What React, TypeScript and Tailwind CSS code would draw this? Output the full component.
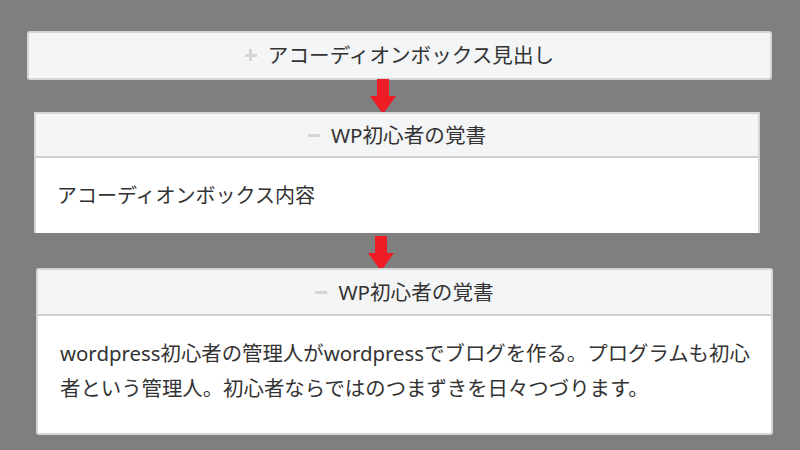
import React from 'react';

const font = { fontFamily: '"Noto Sans", "Noto Sans CJK JP", sans-serif' };

// Red down arrow drawn between the accordion states
function DownArrow({ offset }: { offset: string }) {
  return (
    <div className={`flex ${offset}`}>
      <svg width="28" height="36" viewBox="0 0 28 36">
        <polygon points="8,0 20,0 20,17 27,17 14,35 1,17 8,17" fill="#ee1c25" />
      </svg>
    </div>
  );
}

function Header({ open, title }: { open: boolean; title: string }) {
  return (
    <div className="flex items-center justify-center gap-[11px] text-[20.6px] text-[#333]">
      <span className="relative inline-block w-[12px] h-[12px]">
        <span className="absolute left-0 top-[5px] w-[12px] h-[3px] bg-[#d4d5d7]" />
        {!open && <span className="absolute left-[4.5px] top-0 w-[3px] h-[12px] bg-[#d4d5d7]" />}
      </span>
      <span>{title}</span>
    </div>
  );
}

export default function App() {
  return (
    <div className="w-[800px] h-[450px] bg-[#7f7f7f] overflow-hidden" style={font}>
      <div className="flex flex-col pt-[31px]">
        {/* closed accordion */}
        <div className="ml-[27px] w-[745px] h-[49px] flex items-center justify-center rounded-[3px] border-2 border-[#d6d6d6] bg-[#f4f5f7]">
          <Header open={false} title="アコーディオンボックス見出し" />
        </div>

        <DownArrow offset="ml-[369px] -mt-[1px] h-[33px]" />

        {/* opened accordion, short content */}
        <div className="ml-[34px] w-[726px] h-[121px] flex flex-col border-2 border-b-0 border-[#d6d6d6] bg-white">
          <div className="h-[44px] flex items-center justify-center bg-[#f4f5f7] border-b-2 border-[#d0d0d0]">
            <Header open title="WP初心者の覚書" />
          </div>
          <div className="flex-1 flex items-center px-[21px] text-[20px] text-[#333]">
            アコーディオンボックス内容
          </div>
        </div>

        <DownArrow offset="ml-[367px] mt-[3px] h-[33px]" />

        {/* opened accordion, long content */}
        <div className="ml-[36px] -mt-[1px] w-[737px] h-[167px] flex flex-col rounded-[3px] border-2 border-[#d6d6d6] bg-white overflow-hidden">
          <div className="h-[46px] flex items-center justify-center bg-[#f4f5f7] border-b-2 border-[#d0d0d0]">
            <Header open title="WP初心者の覚書" />
          </div>
          <div className="flex-1 pl-[22px] pr-[12px] pt-[20px] text-[20.4px] leading-[35px] text-[#333]">
            wordpress初心者の管理人がwordpressでブログを作る。プログラムも初心者という管理人。初心者ならではのつまずきを日々つづります。
          </div>
        </div>
      </div>
    </div>
  );
}
